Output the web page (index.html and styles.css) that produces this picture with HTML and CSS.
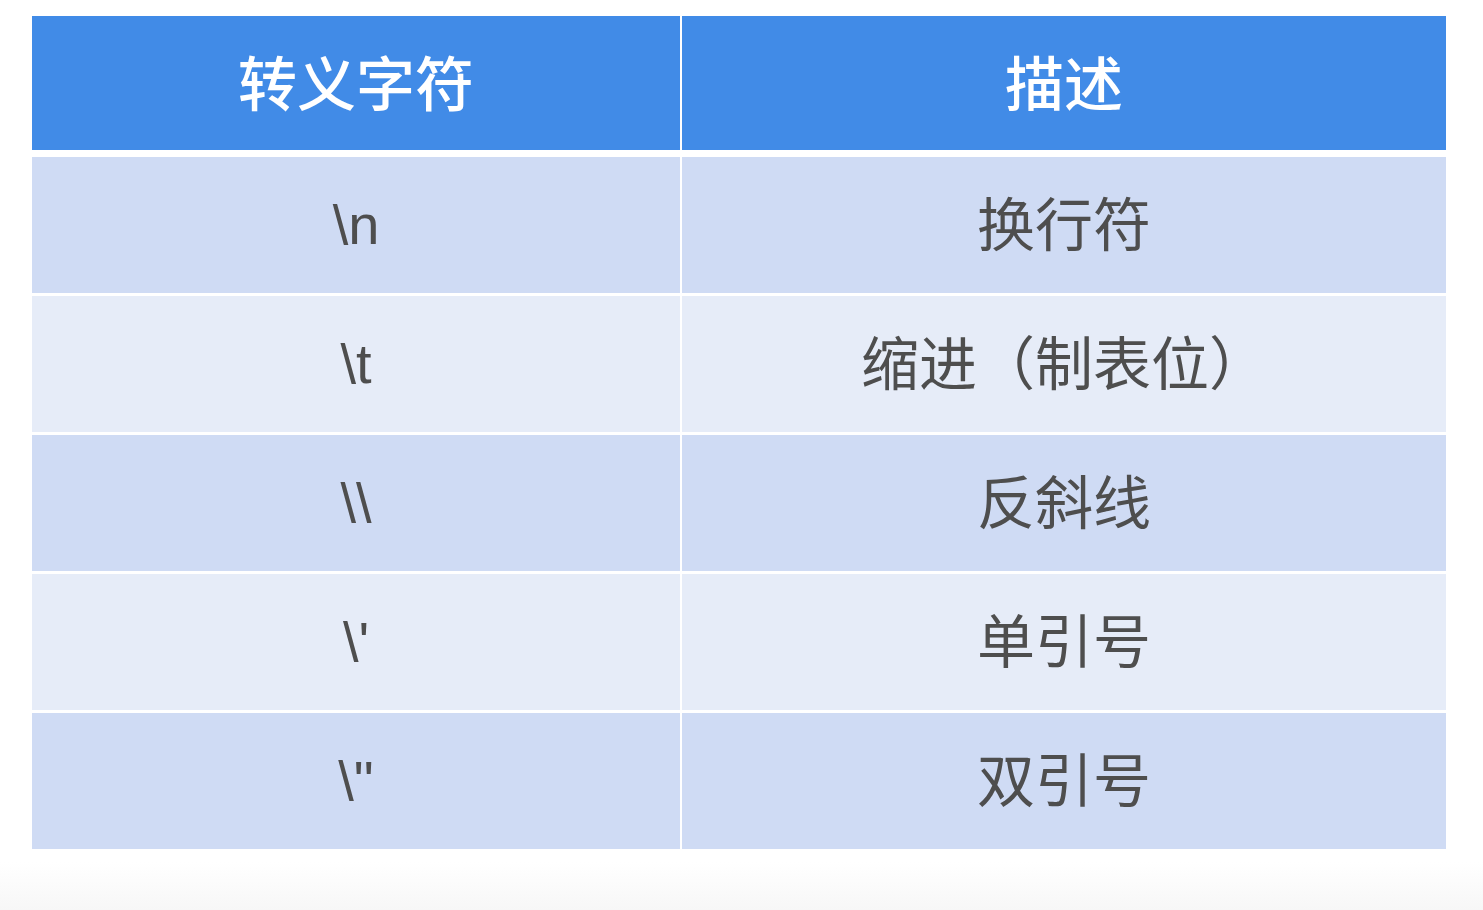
FILE: index.html
```html
<!DOCTYPE html>
<html lang="zh">
<head>
<meta charset="utf-8">
<link rel="stylesheet" href="styles.css">
</head>
<body>
<div class="page">
  <div class="row head">
    <div class="cell">转义字符</div>
    <div class="cell">描述</div>
  </div>
  <div class="body">
    <div class="row odd">
      <div class="cell code">\n</div>
      <div class="cell">换行符</div>
    </div>
    <div class="row even">
      <div class="cell code">\t</div>
      <div class="cell">缩进（制表位）</div>
    </div>
    <div class="row odd">
      <div class="cell code">\\</div>
      <div class="cell">反斜线</div>
    </div>
    <div class="row even">
      <div class="cell code">\'</div>
      <div class="cell">单引号</div>
    </div>
    <div class="row odd">
      <div class="cell code">\"</div>
      <div class="cell">双引号</div>
    </div>
  </div>
</div>
</body>
</html>
```
FILE: styles.css
```css
html, body {
  margin: 0;
  padding: 0;
}
body {
  width: 1483px;
  height: 910px;
  overflow: hidden;
  background: linear-gradient(to bottom, #ffffff 0px, #ffffff 862px, #f7f7f7 910px);
  font-family: "Noto Sans CJK SC", "Noto Sans", sans-serif;
}
.page {
  padding: 16px 0 0 32px;
  width: 1414px;
}
.row {
  display: grid;
  grid-template-columns: 648px 764px;
  column-gap: 2px;
  height: 136px;
}
.head {
  height: 134px;
  margin-bottom: 7px;
}
.body {
  display: flex;
  flex-direction: column;
  gap: 3px;
}
.cell {
  display: flex;
  align-items: center;
  justify-content: center;
  font-size: 58px;
  color: #4e4e4e;
  line-height: 1;
  padding-bottom: 8px;
  box-sizing: border-box;
}
.head .cell {
  background: #418be7;
  color: #ffffff;
  font-weight: 500;
  font-size: 59px;
  padding-bottom: 6px;
}
.code {
  font-family: "Liberation Sans Narrow", "Liberation Sans", sans-serif;
  font-size: 56px;
  padding-bottom: 0;
}
.odd .cell {
  background: #cfdbf4;
}
.even .cell {
  background: #e6ecf8;
}
```
